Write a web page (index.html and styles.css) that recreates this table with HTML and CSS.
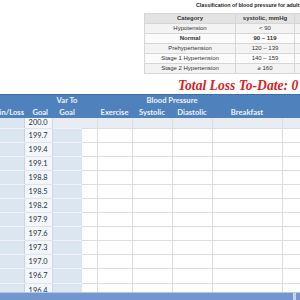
FILE: index.html
```html
<!DOCTYPE html>
<html>
<head>
<meta charset="utf-8">
<link rel="stylesheet" href="styles.css">
</head>
<body>
<div class="page">
  <div class="top">
    <div class="bp">
      <div class="bp-title">Classification of blood pressure for adults</div>
      <table class="bp-table">
        <colgroup><col class="bc1"><col class="bc2"><col class="bc3"></colgroup>
        <tr class="bp-head"><td>Category</td><td>systolic, mmHg</td><td>diastolic, mmHg</td></tr>
        <tr class="alt"><td>Hypotension</td><td>&lt; 90</td><td>&lt; 60</td></tr>
        <tr class="strong"><td>Normal</td><td>90 – 119</td><td>60 – 79</td></tr>
        <tr class="alt"><td>Prehypertension</td><td>120 – 139</td><td>80 – 89</td></tr>
        <tr><td>Stage 1 Hypertension</td><td>140 – 159</td><td>90 – 99</td></tr>
        <tr class="alt"><td>Stage 2 Hypertension</td><td>≥ 160</td><td>≥ 100</td></tr>
      </table>
    </div>
    <div class="total">Total Loss To-Date: 0</div>
  </div>
  <div class="sheet">
    <table class="grid">
      <colgroup>
        <col class="w1"><col class="w2"><col class="w3"><col class="w4"><col class="w5"><col class="w6"><col class="w7"><col class="w8"><col class="w9">
      </colgroup>
      <tr class="hr1">
        <th></th><th></th><th>Var To</th><th></th><th></th><th colspan="2">Blood Pressure</th><th></th><th></th>
      </tr>
      <tr class="hr2">
        <th class="right"><div class="clip">Gain/Loss</div></th><th class="goalh">Goal</th><th>Goal</th><th></th><th>Exercise</th><th>Systolic</th><th>Diastolic</th><th>Breakfast</th><th></th>
      </tr>
      <tr class="first"><td class="c1"></td><td class="c2">200.0</td><td class="c3"></td><td class="c4"></td><td></td><td></td><td></td><td></td><td></td></tr>
      <tr class="row"><td class="c1"></td><td class="c2">199.7</td><td class="c3"></td><td class="c4"></td><td></td><td></td><td></td><td></td><td></td></tr>
      <tr class="row"><td class="c1"></td><td class="c2">199.4</td><td class="c3"></td><td class="c4"></td><td></td><td></td><td></td><td></td><td></td></tr>
      <tr class="row"><td class="c1"></td><td class="c2">199.1</td><td class="c3"></td><td class="c4"></td><td></td><td></td><td></td><td></td><td></td></tr>
      <tr class="row"><td class="c1"></td><td class="c2">198.8</td><td class="c3"></td><td class="c4"></td><td></td><td></td><td></td><td></td><td></td></tr>
      <tr class="row"><td class="c1"></td><td class="c2">198.5</td><td class="c3"></td><td class="c4"></td><td></td><td></td><td></td><td></td><td></td></tr>
      <tr class="row"><td class="c1"></td><td class="c2">198.2</td><td class="c3"></td><td class="c4"></td><td></td><td></td><td></td><td></td><td></td></tr>
      <tr class="row"><td class="c1"></td><td class="c2">197.9</td><td class="c3"></td><td class="c4"></td><td></td><td></td><td></td><td></td><td></td></tr>
      <tr class="row"><td class="c1"></td><td class="c2">197.6</td><td class="c3"></td><td class="c4"></td><td></td><td></td><td></td><td></td><td></td></tr>
      <tr class="row"><td class="c1"></td><td class="c2">197.3</td><td class="c3"></td><td class="c4"></td><td></td><td></td><td></td><td></td><td></td></tr>
      <tr class="row"><td class="c1"></td><td class="c2">197.0</td><td class="c3"></td><td class="c4"></td><td></td><td></td><td></td><td></td><td></td></tr>
      <tr class="row"><td class="c1"></td><td class="c2">196.7</td><td class="c3"></td><td class="c4"></td><td></td><td></td><td></td><td></td><td></td></tr>
      <tr class="row"><td class="c1"></td><td class="c2">196.4</td><td class="c3"></td><td class="c4"></td><td></td><td></td><td></td><td></td><td></td></tr>
    </table>
  </div>
  <div class="bar"><span class="grip"></span></div>
</div>
</body>
</html>
```
FILE: styles.css
```css
html, body {
  margin: 0;
  padding: 0;
  width: 300px;
  height: 300px;
  overflow: hidden;
  background: #ffffff;
}

.page {
  display: flex;
  flex-direction: column;
  width: 300px;
  height: 300px;
}

.top {
  flex: none;
  height: 94px;
  overflow: hidden;
  display: flex;
  flex-direction: column;
  padding-left: 144px;
  box-sizing: border-box;
}

.bp {
  width: 220px;
}

.bp-title {
  height: 13px;
  line-height: 10px;
  padding-left: 52px;
  font-family: "Liberation Sans", Arial, sans-serif;
  font-weight: bold;
  font-size: 5.3px;
  color: #222222;
  white-space: nowrap;
}

.bp-table {
  border-collapse: collapse;
  table-layout: fixed;
  width: 211px;
  font-family: "Liberation Sans", Arial, sans-serif;
  font-size: 6px;
  color: #333333;
}

.bc1 { width: 91px; }
.bc2 { width: 59px; }
.bc3 { width: 61px; }

.bp-table td {
  height: 9px;
  padding: 0;
  border: 1px solid #d6d6d6;
  text-align: center;
  line-height: 9px;
  white-space: nowrap;
  overflow: hidden;
  background: #fbfbfb;
}

.bp-table .alt td {
  background: #f3f3f3;
}

.bp-table .bp-head td {
  background: #e3e3e3;
  font-weight: bold;
}

.bp-table .strong td {
  font-weight: bold;
}

.total {
  margin-top: auto;
  margin-left: 34px;
  height: 17px;
  line-height: 17px;
  font-family: "Liberation Serif", "Times New Roman", serif;
  font-style: italic;
  font-weight: bold;
  font-size: 13.6px;
  color: #dc1c22;
  white-space: nowrap;
}

.sheet {
  flex: none;
  height: 198px;
  overflow: hidden;
}

.grid {
  border-collapse: collapse;
  table-layout: fixed;
  width: 322px;
  font-family: Lato, "Liberation Sans", sans-serif;
}

.w1 { width: 24px; }
.w2 { width: 28px; }
.w3 { width: 30px; }
.w4 { width: 15px; }
.w5 { width: 35px; }
.w6 { width: 40px; }
.w7 { width: 40px; }
.w8 { width: 70px; }
.w9 { width: 40px; }

.grid th {
  background: #4f81bd;
  color: #eef3fa;
  font-weight: bold;
  font-size: 7.6px;
  padding: 0;
  white-space: nowrap;
  text-align: center;
  overflow: hidden;
}

.hr1 {
  height: 12px;
}

.hr1 th {
  line-height: 11px;
  border-top: 1px solid #3f6ea8;
}

.hr2 {
  height: 11px;
}

.hr2 th {
  line-height: 10px;
}

.grid th.right {
  text-align: right;
}

.clip {
  display: flex;
  justify-content: flex-end;
  overflow: hidden;
  width: 24px;
}

.grid th.goalh {
  text-align: right;
  padding-right: 4px;
}

.grid .row {
  height: 14.1px;
}

.grid .first {
  height: 10.5px;
}

.grid td {
  padding: 0;
  line-height: 9px;
  border-bottom: 1px solid #dcdee2;
  border-right: 1px solid #dcdee2;
  background: #ffffff;
  font-size: 7.4px;
  color: #233246;
  white-space: nowrap;
}

.grid td.c1 {
  background: #dce6f1;
  border-bottom-color: #eef2f8;
  border-right-color: #c9d3e0;
}

.grid td.c2 {
  background: #f3f6fa;
  text-align: right;
  padding-right: 4px;
  border-bottom-color: #dfe4ec;
  border-right-color: #d3d9e2;
}

.grid td.c3 {
  background: #dce6f1;
  border-bottom-color: #eef2f8;
  border-right: none;
}

.grid .first td {
  background: #e8edf4;
}

.grid .first td.c1 {
  background: #dce6f1;
}

.grid .first td.c2 {
  background: #f3f6fa;
}

.bar {
  flex: none;
  height: 8px;
  box-sizing: border-box;
  border-top: 1px solid #b3c7e7;
  background: #7296d0;
  display: flex;
  justify-content: flex-end;
  padding-right: 4px;
}

.grip {
  width: 3px;
  height: 7px;
  background: #c9d3e2;
}
```
